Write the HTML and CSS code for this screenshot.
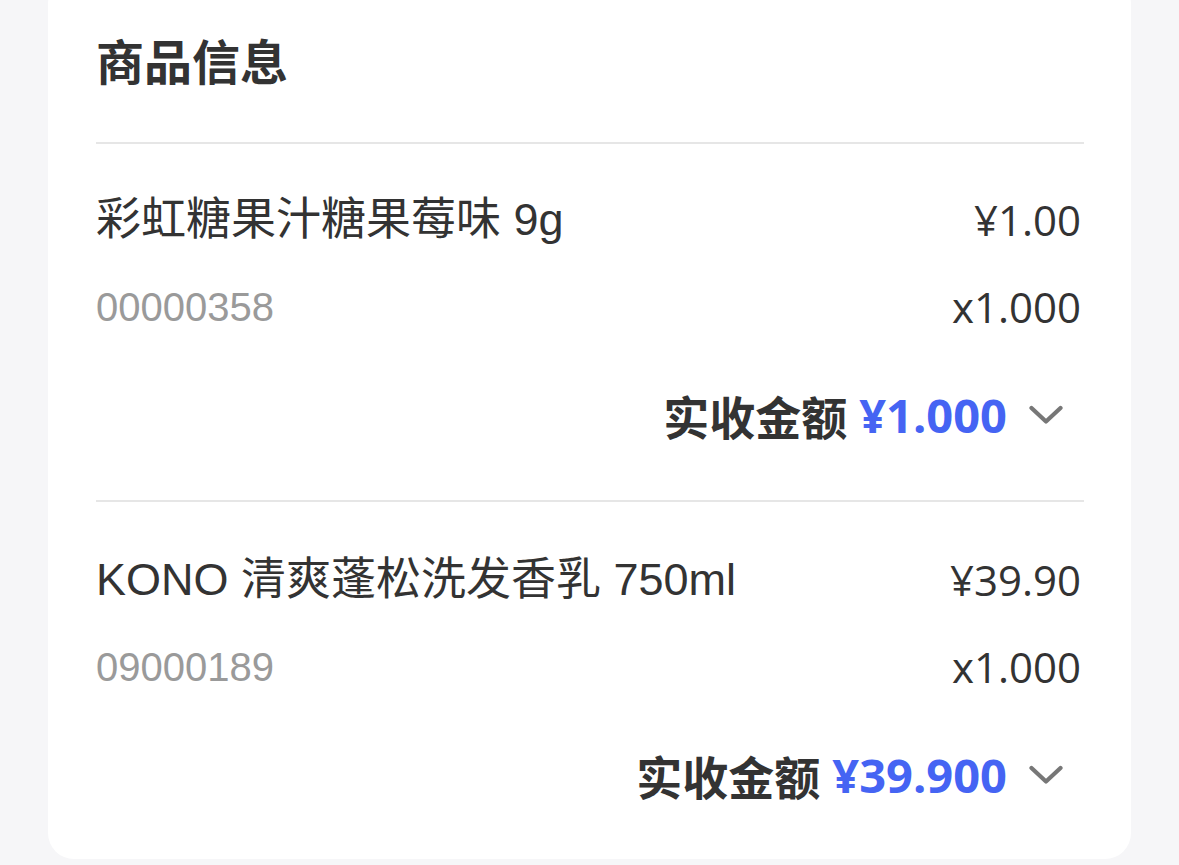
FILE: index.html
```html
<!DOCTYPE html>
<html lang="zh-CN">
<head>
<meta charset="utf-8">
<title>商品信息</title>
<link rel="stylesheet" href="styles.css">
</head>
<body>
<div class="card">
  <h2 class="title">商品信息</h2>
  <div class="item">
    <div class="row">
      <span class="name">彩虹糖果汁糖果莓味 9g</span>
      <span class="price">¥1.00</span>
    </div>
    <div class="row row-code">
      <span class="code">00000358</span>
      <span class="price">x1.000</span>
    </div>
    <div class="row row-total">
      <span class="total-label">实收金额</span>
      <span class="total-value">¥1.000</span>
      <svg class="chevron" width="34" height="20" viewBox="0 0 34 20"><path d="M2.5 3 L17 16.5 L31.5 3" fill="none" stroke="#777" stroke-width="4.2" stroke-linecap="round" stroke-linejoin="round"/></svg>
    </div>
  </div>
  <div class="item">
    <div class="row">
      <span class="name">KONO 清爽蓬松洗发香乳 750ml</span>
      <span class="price">¥39.90</span>
    </div>
    <div class="row row-code">
      <span class="code">09000189</span>
      <span class="price">x1.000</span>
    </div>
    <div class="row row-total">
      <span class="total-label">实收金额</span>
      <span class="total-value">¥39.900</span>
      <svg class="chevron" width="34" height="20" viewBox="0 0 34 20"><path d="M2.5 3 L17 16.5 L31.5 3" fill="none" stroke="#777" stroke-width="4.2" stroke-linecap="round" stroke-linejoin="round"/></svg>
    </div>
  </div>
</div>
</body>
</html>
```
FILE: styles.css
```css
html, body {
  margin: 0;
  padding: 0;
  background: #f6f6f8;
}
body {
  width: 1179px;
  height: 865px;
  overflow: hidden;
  font-family: "Liberation Sans", "Noto Sans CJK SC", sans-serif;
  color: #333333;
}
.card {
  margin: -22px 0 0 48px;
  width: 1083px;
  box-sizing: border-box;
  background: #ffffff;
  border-radius: 26px;
  padding: 51px 47px 0 48px;
}
.title {
  margin: 0;
  font-family: "Noto Sans CJK SC", sans-serif;
  font-size: 48px;
  font-weight: 700;
  line-height: 60px;
  height: 60px;
  padding-bottom: 53px;
  color: #333333;
}
.item {
  border-top: 2px solid #e6e6e6;
  padding: 46px 3px 55px 0;
}
.item + .item {
  padding-top: 48px;
  padding-bottom: 54px;
}
.row {
  display: flex;
  align-items: center;
  justify-content: space-between;
  height: 60px;
  line-height: 60px;
}
.row-code {
  margin-top: 27px;
}
.row-total {
  margin-top: 48px;
  justify-content: flex-end;
}
.name {
  font-family: "Liberation Sans", "Noto Sans CJK SC", sans-serif;
  font-size: 45px;
  color: #333333;
  white-space: nowrap;
}
.price {
  font-family: "Open Sans", "Noto Sans CJK SC", sans-serif;
  font-size: 42px;
  color: #333333;
}
.code {
  font-family: "Liberation Sans", sans-serif;
  font-size: 40px;
  color: #9a9a9a;
}
.total-label {
  font-family: "Noto Sans CJK SC", sans-serif;
  font-size: 46px;
  font-weight: 700;
  color: #333333;
}
.total-value {
  font-family: "Open Sans", "Noto Sans CJK SC", sans-serif;
  font-size: 47px;
  font-weight: 700;
  color: #4564f3;
  margin-left: 12px;
}
.chevron {
  display: block;
  margin-left: 22px;
  margin-right: 18px;
}
```
